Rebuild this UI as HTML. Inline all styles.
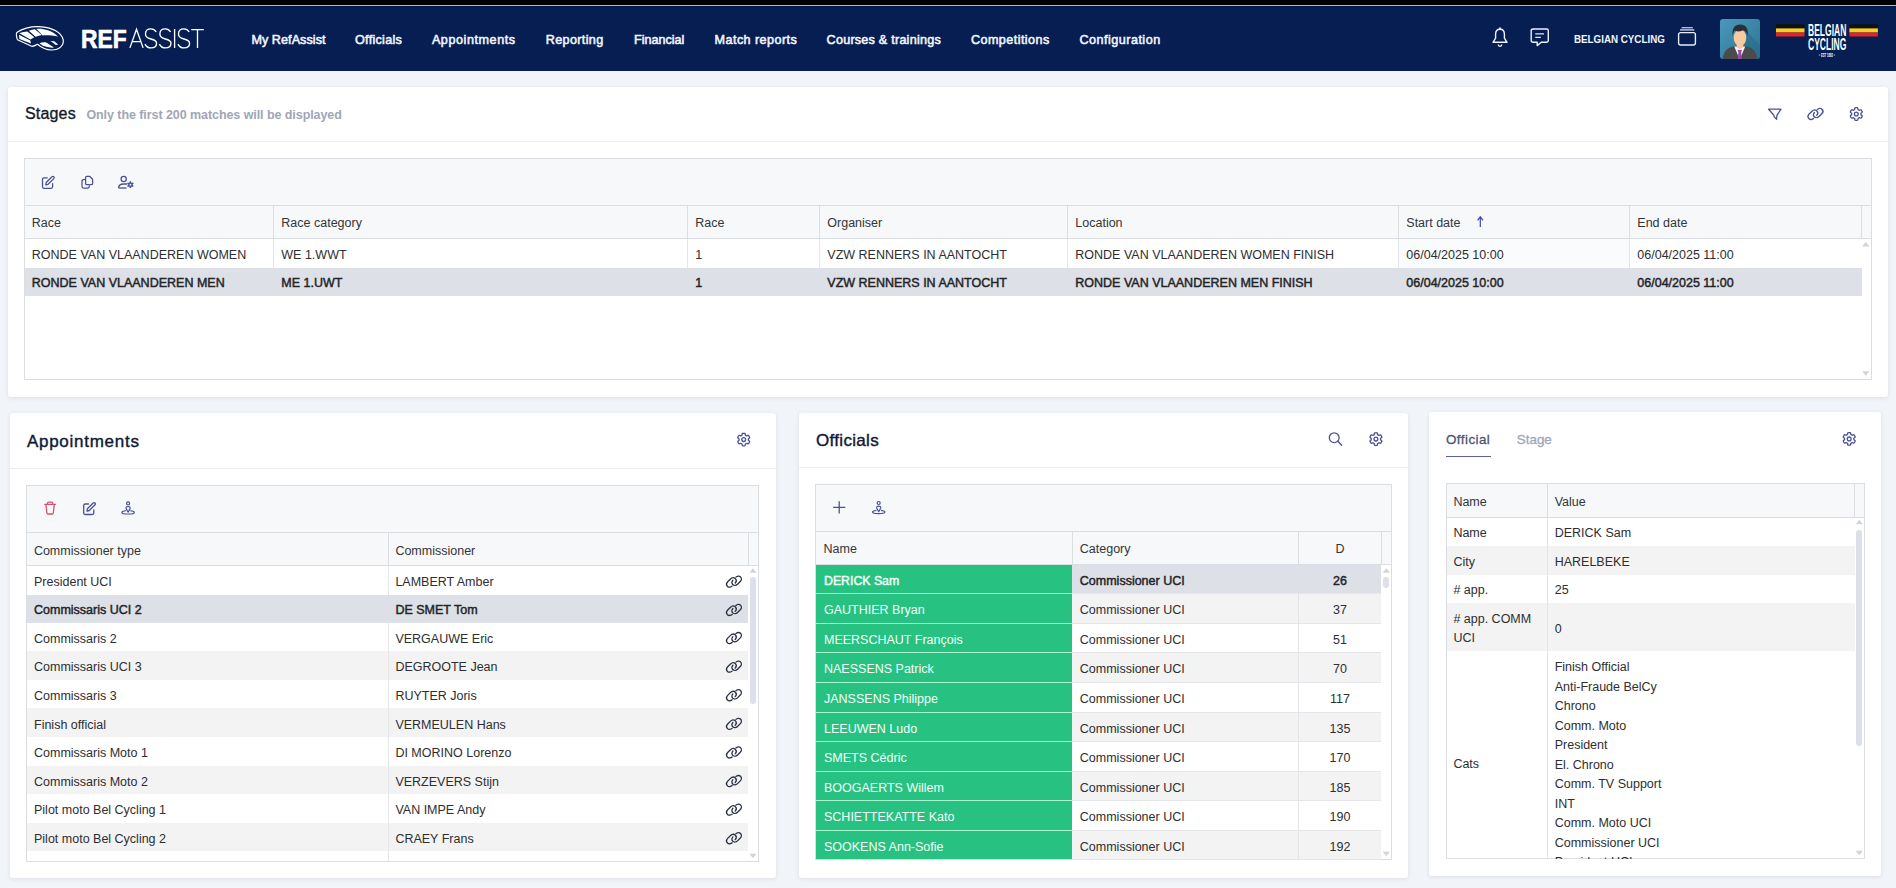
<!DOCTYPE html>
<html><head><meta charset="utf-8"><title>RefAssist</title>
<style>
html,body{margin:0;padding:0;}
body{width:1896px;height:888px;overflow:hidden;position:relative;background:#f1f4f8;font-family:"Liberation Sans",sans-serif;}
.r{position:absolute;}
.t{position:absolute;white-space:nowrap;line-height:1;}
svg.ov{position:absolute;left:0;top:0;width:1896px;height:888px;pointer-events:none;}
</style></head><body>
<div class="r" style="left:0.00px;top:0.00px;width:1896.00px;height:5.00px;background:#000;"></div><div class="r" style="left:0.00px;top:5.00px;width:1896.00px;height:1.00px;background:#b7bbc8;"></div><div class="r" style="left:0.00px;top:6.00px;width:1896.00px;height:1.00px;background:#041444;"></div><div class="r" style="left:0.00px;top:7.00px;width:1896.00px;height:64.00px;background:#061e52;"></div><div class="t" style="left:81.00px;top:26.27px;font-size:26.5px;color:#fff;font-weight:bold;-webkit-text-stroke:0.7px #fff;transform:scaleX(0.86);transform-origin:0 0;">REF</div><div class="t" style="left:251.40px;top:33.83px;font-size:12.6px;color:#f2f5fb;letter-spacing:0.061px;-webkit-text-stroke:0.55px #f2f5fb;">My RefAssist</div><div class="t" style="left:355.00px;top:33.83px;font-size:12.6px;color:#f2f5fb;letter-spacing:0.284px;-webkit-text-stroke:0.55px #f2f5fb;">Officials</div><div class="t" style="left:431.90px;top:33.83px;font-size:12.6px;color:#f2f5fb;letter-spacing:0.560px;-webkit-text-stroke:0.55px #f2f5fb;">Appointments</div><div class="t" style="left:545.80px;top:33.83px;font-size:12.6px;color:#f2f5fb;letter-spacing:0.347px;-webkit-text-stroke:0.55px #f2f5fb;">Reporting</div><div class="t" style="left:634.00px;top:33.83px;font-size:12.6px;color:#f2f5fb;letter-spacing:-0.019px;-webkit-text-stroke:0.55px #f2f5fb;">Financial</div><div class="t" style="left:714.60px;top:33.83px;font-size:12.6px;color:#f2f5fb;letter-spacing:0.434px;-webkit-text-stroke:0.55px #f2f5fb;">Match reports</div><div class="t" style="left:826.60px;top:33.83px;font-size:12.6px;color:#f2f5fb;letter-spacing:0.234px;-webkit-text-stroke:0.55px #f2f5fb;">Courses &amp; trainings</div><div class="t" style="left:971.00px;top:33.83px;font-size:12.6px;color:#f2f5fb;letter-spacing:0.428px;-webkit-text-stroke:0.55px #f2f5fb;">Competitions</div><div class="t" style="left:1079.40px;top:33.83px;font-size:12.6px;color:#f2f5fb;letter-spacing:0.487px;-webkit-text-stroke:0.55px #f2f5fb;">Configuration</div><div class="t" style="left:1573.50px;top:34.09px;font-size:11px;color:#f2f5fb;font-weight:bold;transform:scaleX(0.89);transform-origin:0 0;">BELGIAN CYCLING</div><div class="t" style="left:1807.60px;top:21.93px;font-size:16.5px;color:#fff;font-weight:bold;transform:scaleX(0.517);transform-origin:0 0;">BELGIAN</div><div class="t" style="left:1807.60px;top:36.03px;font-size:16.5px;color:#fff;font-weight:bold;transform:scaleX(0.517);transform-origin:0 0;">CYCLING</div><div class="t" style="left:1821.00px;top:52.63px;font-size:5.4px;color:#fff;font-weight:bold;transform:scaleX(0.5);transform-origin:0 0;">EST 1882</div><div class="r" style="left:8.00px;top:87.00px;width:1880.00px;height:310.00px;background:#fff;border-radius:3px;box-shadow:0 1px 4px rgba(30,40,70,0.10);"></div><div class="r" style="left:10.00px;top:413.00px;width:766.00px;height:465.00px;background:#fff;border-radius:3px;box-shadow:0 1px 4px rgba(30,40,70,0.10);"></div><div class="r" style="left:799.00px;top:413.00px;width:609.00px;height:465.00px;background:#fff;border-radius:3px;box-shadow:0 1px 4px rgba(30,40,70,0.10);"></div><div class="r" style="left:1429.00px;top:412.00px;width:452.00px;height:464.00px;background:#fff;border-radius:3px;box-shadow:0 1px 4px rgba(30,40,70,0.10);"></div><div class="t" style="left:24.90px;top:106.16px;font-size:16px;color:#121a2f;letter-spacing:0.193px;-webkit-text-stroke:0.35px #121a2f;">Stages</div><div class="t" style="left:86.40px;top:109.12px;font-size:12.5px;color:#a0a6b6;font-weight:bold;letter-spacing:-0.068px;">Only the first 200 matches will be displayed</div><div class="r" style="left:8.00px;top:141.00px;width:1880.00px;height:1.00px;background:#eceef2;"></div><div class="r" style="left:24.00px;top:158.00px;width:1848.00px;height:222.00px;background:#fff;box-sizing:border-box;border:1px solid #dadde2;"></div><div class="r" style="left:25.00px;top:159.00px;width:1846.00px;height:46.00px;background:#f7f8fa;"></div><div class="r" style="left:25.00px;top:205.00px;width:1846.00px;height:1.00px;background:#dadde2;"></div><div class="r" style="left:25.00px;top:206.00px;width:1846.00px;height:32.00px;background:#f7f8fa;"></div><div class="r" style="left:25.00px;top:238.00px;width:1846.00px;height:1.00px;background:#dadde2;"></div><div class="r" style="left:273.00px;top:206.00px;width:1.00px;height:32.00px;background:#dadde2;"></div><div class="r" style="left:687.00px;top:206.00px;width:1.00px;height:32.00px;background:#dadde2;"></div><div class="r" style="left:819.00px;top:206.00px;width:1.00px;height:32.00px;background:#dadde2;"></div><div class="r" style="left:1067.00px;top:206.00px;width:1.00px;height:32.00px;background:#dadde2;"></div><div class="r" style="left:1398.00px;top:206.00px;width:1.00px;height:32.00px;background:#dadde2;"></div><div class="r" style="left:1629.00px;top:206.00px;width:1.00px;height:32.00px;background:#dadde2;"></div><div class="r" style="left:1861.00px;top:206.00px;width:1.00px;height:32.00px;background:#dadde2;"></div><div class="t" style="left:31.80px;top:217.42px;font-size:12.5px;color:#333538;">Race</div><div class="t" style="left:281.30px;top:217.42px;font-size:12.5px;color:#333538;">Race category</div><div class="t" style="left:695.30px;top:217.42px;font-size:12.5px;color:#333538;">Race</div><div class="t" style="left:827.30px;top:217.42px;font-size:12.5px;color:#333538;">Organiser</div><div class="t" style="left:1075.30px;top:217.42px;font-size:12.5px;color:#333538;">Location</div><div class="t" style="left:1406.30px;top:217.42px;font-size:12.5px;color:#333538;">Start date</div><div class="t" style="left:1637.30px;top:217.42px;font-size:12.5px;color:#333538;">End date</div><div class="r" style="left:1399.00px;top:239.00px;width:230.00px;height:29.00px;background:#fafbfc;"></div><div class="r" style="left:273.00px;top:239.00px;width:1.00px;height:29.00px;background:#e4e6ea;"></div><div class="r" style="left:687.00px;top:239.00px;width:1.00px;height:29.00px;background:#e4e6ea;"></div><div class="r" style="left:819.00px;top:239.00px;width:1.00px;height:29.00px;background:#e4e6ea;"></div><div class="r" style="left:1067.00px;top:239.00px;width:1.00px;height:29.00px;background:#e4e6ea;"></div><div class="r" style="left:1398.00px;top:239.00px;width:1.00px;height:29.00px;background:#e4e6ea;"></div><div class="r" style="left:1629.00px;top:239.00px;width:1.00px;height:29.00px;background:#e4e6ea;"></div><div class="r" style="left:25.00px;top:268.00px;width:1836.50px;height:27.70px;background:#dde0e6;"></div><div class="t" style="left:31.80px;top:249.02px;font-size:12.5px;color:#2e2e30;">RONDE VAN VLAANDEREN WOMEN</div><div class="t" style="left:281.30px;top:249.02px;font-size:12.5px;color:#2e2e30;">WE 1.WWT</div><div class="t" style="left:695.30px;top:249.02px;font-size:12.5px;color:#2e2e30;">1</div><div class="t" style="left:827.30px;top:249.02px;font-size:12.5px;color:#2e2e30;">VZW RENNERS IN AANTOCHT</div><div class="t" style="left:1075.30px;top:249.02px;font-size:12.5px;color:#2e2e30;">RONDE VAN VLAANDEREN WOMEN FINISH</div><div class="t" style="left:1406.30px;top:249.02px;font-size:12.5px;color:#2e2e30;">06/04/2025 10:00</div><div class="t" style="left:1637.30px;top:249.02px;font-size:12.5px;color:#2e2e30;">06/04/2025 11:00</div><div class="t" style="left:31.80px;top:276.62px;font-size:12.5px;color:#232427;-webkit-text-stroke:0.45px #232427;">RONDE VAN VLAANDEREN MEN</div><div class="t" style="left:281.30px;top:276.62px;font-size:12.5px;color:#232427;-webkit-text-stroke:0.45px #232427;">ME 1.UWT</div><div class="t" style="left:695.30px;top:276.62px;font-size:12.5px;color:#232427;-webkit-text-stroke:0.45px #232427;">1</div><div class="t" style="left:827.30px;top:276.62px;font-size:12.5px;color:#232427;-webkit-text-stroke:0.45px #232427;">VZW RENNERS IN AANTOCHT</div><div class="t" style="left:1075.30px;top:276.62px;font-size:12.5px;color:#232427;-webkit-text-stroke:0.45px #232427;">RONDE VAN VLAANDEREN MEN FINISH</div><div class="t" style="left:1406.30px;top:276.62px;font-size:12.5px;color:#232427;-webkit-text-stroke:0.45px #232427;">06/04/2025 10:00</div><div class="t" style="left:1637.30px;top:276.62px;font-size:12.5px;color:#232427;-webkit-text-stroke:0.45px #232427;">06/04/2025 11:00</div><div class="t" style="left:26.90px;top:432.91px;font-size:17px;color:#101935;letter-spacing:0.739px;-webkit-text-stroke:0.4px #101935;">Appointments</div><div class="r" style="left:10.00px;top:468.00px;width:766.00px;height:1.00px;background:#eceef2;"></div><div class="r" style="left:26.00px;top:485.00px;width:733.00px;height:377.00px;background:#fff;box-sizing:border-box;border:1px solid #dadde2;"></div><div class="r" style="left:27.00px;top:486.00px;width:731.00px;height:46.00px;background:#f7f8fa;"></div><div class="r" style="left:27.00px;top:532.00px;width:731.00px;height:1.00px;background:#dadde2;"></div><div class="r" style="left:27.00px;top:533.00px;width:731.00px;height:32.00px;background:#f7f8fa;"></div><div class="r" style="left:27.00px;top:565.00px;width:731.00px;height:1.00px;background:#dadde2;"></div><div class="r" style="left:388.20px;top:533.00px;width:1.00px;height:32.00px;background:#dadde2;"></div><div class="r" style="left:748.00px;top:533.00px;width:1.00px;height:32.00px;background:#dadde2;"></div><div class="t" style="left:33.90px;top:544.92px;font-size:12.5px;color:#333538;">Commissioner type</div><div class="t" style="left:395.40px;top:544.92px;font-size:12.5px;color:#333538;">Commissioner</div><div class="r" style="left:27.00px;top:566.00px;width:721.00px;height:29.00px;background:#fff;"></div><div class="r" style="left:388.20px;top:566.00px;width:1.00px;height:29.00px;background:#e6e7ea;"></div><div class="t" style="left:34.00px;top:576.12px;font-size:12.5px;color:#2e2e30;">President UCI</div><div class="t" style="left:395.40px;top:576.12px;font-size:12.5px;color:#2e2e30;">LAMBERT Amber</div><div class="r" style="left:27.00px;top:595.00px;width:721.00px;height:27.60px;background:#dde0e6;"></div><div class="t" style="left:34.00px;top:604.12px;font-size:12.5px;color:#232427;-webkit-text-stroke:0.45px #232427;">Commissaris UCI 2</div><div class="t" style="left:395.40px;top:604.12px;font-size:12.5px;color:#232427;-webkit-text-stroke:0.45px #232427;">DE SMET Tom</div><div class="r" style="left:27.00px;top:622.60px;width:721.00px;height:28.60px;background:#fff;"></div><div class="r" style="left:388.20px;top:622.60px;width:1.00px;height:28.60px;background:#e6e7ea;"></div><div class="t" style="left:34.00px;top:632.72px;font-size:12.5px;color:#2e2e30;">Commissaris 2</div><div class="t" style="left:395.40px;top:632.72px;font-size:12.5px;color:#2e2e30;">VERGAUWE Eric</div><div class="r" style="left:27.00px;top:651.20px;width:721.00px;height:28.60px;background:#f3f3f4;"></div><div class="r" style="left:388.20px;top:651.20px;width:1.00px;height:28.60px;background:#e6e7ea;"></div><div class="t" style="left:34.00px;top:661.32px;font-size:12.5px;color:#2e2e30;">Commissaris UCI 3</div><div class="t" style="left:395.40px;top:661.32px;font-size:12.5px;color:#2e2e30;">DEGROOTE Jean</div><div class="r" style="left:27.00px;top:679.80px;width:721.00px;height:28.60px;background:#fff;"></div><div class="r" style="left:388.20px;top:679.80px;width:1.00px;height:28.60px;background:#e6e7ea;"></div><div class="t" style="left:34.00px;top:689.92px;font-size:12.5px;color:#2e2e30;">Commissaris 3</div><div class="t" style="left:395.40px;top:689.92px;font-size:12.5px;color:#2e2e30;">RUYTER Joris</div><div class="r" style="left:27.00px;top:708.40px;width:721.00px;height:28.60px;background:#f3f3f4;"></div><div class="r" style="left:388.20px;top:708.40px;width:1.00px;height:28.60px;background:#e6e7ea;"></div><div class="t" style="left:34.00px;top:718.52px;font-size:12.5px;color:#2e2e30;">Finish official</div><div class="t" style="left:395.40px;top:718.52px;font-size:12.5px;color:#2e2e30;">VERMEULEN Hans</div><div class="r" style="left:27.00px;top:737.00px;width:721.00px;height:28.60px;background:#fff;"></div><div class="r" style="left:388.20px;top:737.00px;width:1.00px;height:28.60px;background:#e6e7ea;"></div><div class="t" style="left:34.00px;top:747.12px;font-size:12.5px;color:#2e2e30;">Commissaris Moto 1</div><div class="t" style="left:395.40px;top:747.12px;font-size:12.5px;color:#2e2e30;">DI MORINO Lorenzo</div><div class="r" style="left:27.00px;top:765.60px;width:721.00px;height:28.60px;background:#f3f3f4;"></div><div class="r" style="left:388.20px;top:765.60px;width:1.00px;height:28.60px;background:#e6e7ea;"></div><div class="t" style="left:34.00px;top:775.72px;font-size:12.5px;color:#2e2e30;">Commissaris Moto 2</div><div class="t" style="left:395.40px;top:775.72px;font-size:12.5px;color:#2e2e30;">VERZEVERS Stijn</div><div class="r" style="left:27.00px;top:794.20px;width:721.00px;height:28.60px;background:#fff;"></div><div class="r" style="left:388.20px;top:794.20px;width:1.00px;height:28.60px;background:#e6e7ea;"></div><div class="t" style="left:34.00px;top:804.32px;font-size:12.5px;color:#2e2e30;">Pilot moto Bel Cycling 1</div><div class="t" style="left:395.40px;top:804.32px;font-size:12.5px;color:#2e2e30;">VAN IMPE Andy</div><div class="r" style="left:27.00px;top:822.80px;width:721.00px;height:28.60px;background:#f3f3f4;"></div><div class="r" style="left:388.20px;top:822.80px;width:1.00px;height:28.60px;background:#e6e7ea;"></div><div class="t" style="left:34.00px;top:832.92px;font-size:12.5px;color:#2e2e30;">Pilot moto Bel Cycling 2</div><div class="t" style="left:395.40px;top:832.92px;font-size:12.5px;color:#2e2e30;">CRAEY Frans</div><div class="r" style="left:27.00px;top:851.40px;width:721.00px;height:9.60px;background:#fff;"></div><div class="r" style="left:388.20px;top:851.40px;width:1.00px;height:9.60px;background:#e6e7ea;"></div><div class="r" style="left:750.20px;top:577.00px;width:5.80px;height:127.00px;background:#dde0ea;border-radius:3px;"></div><div class="t" style="left:816.00px;top:431.91px;font-size:17px;color:#101935;letter-spacing:0.318px;-webkit-text-stroke:0.4px #101935;">Officials</div><div class="r" style="left:799.00px;top:467.00px;width:609.00px;height:1.00px;background:#eceef2;"></div><div class="r" style="left:815.00px;top:484.00px;width:577.00px;height:376.00px;background:#fff;box-sizing:border-box;border:1px solid #dadde2;"></div><div class="r" style="left:816.00px;top:485.00px;width:575.00px;height:46.00px;background:#f7f8fa;"></div><div class="r" style="left:816.00px;top:531.00px;width:575.00px;height:1.00px;background:#dadde2;"></div><div class="r" style="left:816.00px;top:532.00px;width:575.00px;height:32.00px;background:#f7f8fa;"></div><div class="r" style="left:816.00px;top:564.00px;width:575.00px;height:1.00px;background:#dadde2;"></div><div class="r" style="left:1071.50px;top:532.00px;width:1.00px;height:32.00px;background:#dadde2;"></div><div class="r" style="left:1297.70px;top:532.00px;width:1.00px;height:32.00px;background:#dadde2;"></div><div class="r" style="left:1380.90px;top:532.00px;width:1.00px;height:32.00px;background:#dadde2;"></div><div class="t" style="left:823.60px;top:542.92px;font-size:12.5px;color:#333538;">Name</div><div class="t" style="left:1079.80px;top:542.92px;font-size:12.5px;color:#333538;">Category</div><div class="t" style="left:1335.60px;top:542.92px;font-size:12.5px;color:#333538;">D</div><div class="r" style="left:816.00px;top:564.80px;width:256.00px;height:29.56px;background:#a6f5cf;"></div><div class="r" style="left:816.00px;top:564.80px;width:256.00px;height:28.56px;background:#27c281;"></div><div class="r" style="left:1072.00px;top:564.80px;width:309.40px;height:29.56px;background:#e5e6e9;"></div><div class="r" style="left:1072.00px;top:564.80px;width:309.40px;height:28.56px;background:#dde0e6;"></div><div class="t" style="left:824.00px;top:574.89px;font-size:12.3px;color:#effff7;-webkit-text-stroke:0.45px #effff7;">DERICK Sam</div><div class="t" style="left:1079.80px;top:574.72px;font-size:12.5px;color:#232427;-webkit-text-stroke:0.45px #232427;">Commissioner UCI</div><div class="t" style="left:1333.05px;top:574.72px;font-size:12.5px;color:#232427;-webkit-text-stroke:0.45px #232427;">26</div><div class="r" style="left:816.00px;top:594.36px;width:256.00px;height:29.56px;background:#a6f5cf;"></div><div class="r" style="left:816.00px;top:594.36px;width:256.00px;height:28.56px;background:#27c281;"></div><div class="r" style="left:1072.00px;top:594.36px;width:309.40px;height:29.56px;background:#e5e6e9;"></div><div class="r" style="left:1072.00px;top:594.36px;width:309.40px;height:28.56px;background:#f3f3f4;"></div><div class="r" style="left:1297.70px;top:594.36px;width:1.00px;height:28.56px;background:#e3e4e7;"></div><div class="t" style="left:824.00px;top:604.28px;font-size:12.5px;color:#f4fff9;">GAUTHIER Bryan</div><div class="t" style="left:1079.80px;top:604.28px;font-size:12.5px;color:#2e2e30;">Commissioner UCI</div><div class="t" style="left:1333.05px;top:604.28px;font-size:12.5px;color:#2e2e30;">37</div><div class="r" style="left:816.00px;top:623.92px;width:256.00px;height:29.56px;background:#a6f5cf;"></div><div class="r" style="left:816.00px;top:623.92px;width:256.00px;height:28.56px;background:#27c281;"></div><div class="r" style="left:1072.00px;top:623.92px;width:309.40px;height:29.56px;background:#e5e6e9;"></div><div class="r" style="left:1072.00px;top:623.92px;width:309.40px;height:28.56px;background:#fff;"></div><div class="r" style="left:1297.70px;top:623.92px;width:1.00px;height:28.56px;background:#e3e4e7;"></div><div class="t" style="left:824.00px;top:633.84px;font-size:12.5px;color:#f4fff9;">MEERSCHAUT François</div><div class="t" style="left:1079.80px;top:633.84px;font-size:12.5px;color:#2e2e30;">Commissioner UCI</div><div class="t" style="left:1333.05px;top:633.84px;font-size:12.5px;color:#2e2e30;">51</div><div class="r" style="left:816.00px;top:653.48px;width:256.00px;height:29.56px;background:#a6f5cf;"></div><div class="r" style="left:816.00px;top:653.48px;width:256.00px;height:28.56px;background:#27c281;"></div><div class="r" style="left:1072.00px;top:653.48px;width:309.40px;height:29.56px;background:#e5e6e9;"></div><div class="r" style="left:1072.00px;top:653.48px;width:309.40px;height:28.56px;background:#f3f3f4;"></div><div class="r" style="left:1297.70px;top:653.48px;width:1.00px;height:28.56px;background:#e3e4e7;"></div><div class="t" style="left:824.00px;top:663.40px;font-size:12.5px;color:#f4fff9;">NAESSENS Patrick</div><div class="t" style="left:1079.80px;top:663.40px;font-size:12.5px;color:#2e2e30;">Commissioner UCI</div><div class="t" style="left:1333.05px;top:663.40px;font-size:12.5px;color:#2e2e30;">70</div><div class="r" style="left:816.00px;top:683.04px;width:256.00px;height:29.56px;background:#a6f5cf;"></div><div class="r" style="left:816.00px;top:683.04px;width:256.00px;height:28.56px;background:#27c281;"></div><div class="r" style="left:1072.00px;top:683.04px;width:309.40px;height:29.56px;background:#e5e6e9;"></div><div class="r" style="left:1072.00px;top:683.04px;width:309.40px;height:28.56px;background:#fff;"></div><div class="r" style="left:1297.70px;top:683.04px;width:1.00px;height:28.56px;background:#e3e4e7;"></div><div class="t" style="left:824.00px;top:692.96px;font-size:12.5px;color:#f4fff9;">JANSSENS Philippe</div><div class="t" style="left:1079.80px;top:692.96px;font-size:12.5px;color:#2e2e30;">Commissioner UCI</div><div class="t" style="left:1330.03px;top:692.96px;font-size:12.5px;color:#2e2e30;">117</div><div class="r" style="left:816.00px;top:712.60px;width:256.00px;height:29.56px;background:#a6f5cf;"></div><div class="r" style="left:816.00px;top:712.60px;width:256.00px;height:28.56px;background:#27c281;"></div><div class="r" style="left:1072.00px;top:712.60px;width:309.40px;height:29.56px;background:#e5e6e9;"></div><div class="r" style="left:1072.00px;top:712.60px;width:309.40px;height:28.56px;background:#f3f3f4;"></div><div class="r" style="left:1297.70px;top:712.60px;width:1.00px;height:28.56px;background:#e3e4e7;"></div><div class="t" style="left:824.00px;top:722.52px;font-size:12.5px;color:#f4fff9;">LEEUWEN Ludo</div><div class="t" style="left:1079.80px;top:722.52px;font-size:12.5px;color:#2e2e30;">Commissioner UCI</div><div class="t" style="left:1329.57px;top:722.52px;font-size:12.5px;color:#2e2e30;">135</div><div class="r" style="left:816.00px;top:742.16px;width:256.00px;height:29.56px;background:#a6f5cf;"></div><div class="r" style="left:816.00px;top:742.16px;width:256.00px;height:28.56px;background:#27c281;"></div><div class="r" style="left:1072.00px;top:742.16px;width:309.40px;height:29.56px;background:#e5e6e9;"></div><div class="r" style="left:1072.00px;top:742.16px;width:309.40px;height:28.56px;background:#fff;"></div><div class="r" style="left:1297.70px;top:742.16px;width:1.00px;height:28.56px;background:#e3e4e7;"></div><div class="t" style="left:824.00px;top:752.08px;font-size:12.5px;color:#f4fff9;">SMETS Cédric</div><div class="t" style="left:1079.80px;top:752.08px;font-size:12.5px;color:#2e2e30;">Commissioner UCI</div><div class="t" style="left:1329.57px;top:752.08px;font-size:12.5px;color:#2e2e30;">170</div><div class="r" style="left:816.00px;top:771.72px;width:256.00px;height:29.56px;background:#a6f5cf;"></div><div class="r" style="left:816.00px;top:771.72px;width:256.00px;height:28.56px;background:#27c281;"></div><div class="r" style="left:1072.00px;top:771.72px;width:309.40px;height:29.56px;background:#e5e6e9;"></div><div class="r" style="left:1072.00px;top:771.72px;width:309.40px;height:28.56px;background:#f3f3f4;"></div><div class="r" style="left:1297.70px;top:771.72px;width:1.00px;height:28.56px;background:#e3e4e7;"></div><div class="t" style="left:824.00px;top:781.64px;font-size:12.5px;color:#f4fff9;">BOOGAERTS Willem</div><div class="t" style="left:1079.80px;top:781.64px;font-size:12.5px;color:#2e2e30;">Commissioner UCI</div><div class="t" style="left:1329.57px;top:781.64px;font-size:12.5px;color:#2e2e30;">185</div><div class="r" style="left:816.00px;top:801.28px;width:256.00px;height:29.56px;background:#a6f5cf;"></div><div class="r" style="left:816.00px;top:801.28px;width:256.00px;height:28.56px;background:#27c281;"></div><div class="r" style="left:1072.00px;top:801.28px;width:309.40px;height:29.56px;background:#e5e6e9;"></div><div class="r" style="left:1072.00px;top:801.28px;width:309.40px;height:28.56px;background:#fff;"></div><div class="r" style="left:1297.70px;top:801.28px;width:1.00px;height:28.56px;background:#e3e4e7;"></div><div class="t" style="left:824.00px;top:811.20px;font-size:12.5px;color:#f4fff9;">SCHIETTEKATTE Kato</div><div class="t" style="left:1079.80px;top:811.20px;font-size:12.5px;color:#2e2e30;">Commissioner UCI</div><div class="t" style="left:1329.57px;top:811.20px;font-size:12.5px;color:#2e2e30;">190</div><div class="r" style="left:816.00px;top:830.84px;width:256.00px;height:29.16px;background:#a6f5cf;"></div><div class="r" style="left:816.00px;top:830.84px;width:256.00px;height:28.16px;background:#27c281;"></div><div class="r" style="left:1072.00px;top:830.84px;width:309.40px;height:29.16px;background:#e5e6e9;"></div><div class="r" style="left:1072.00px;top:830.84px;width:309.40px;height:28.16px;background:#f3f3f4;"></div><div class="r" style="left:1297.70px;top:830.84px;width:1.00px;height:28.16px;background:#e3e4e7;"></div><div class="t" style="left:824.00px;top:840.76px;font-size:12.5px;color:#f4fff9;">SOOKENS Ann-Sofie</div><div class="t" style="left:1079.80px;top:840.76px;font-size:12.5px;color:#2e2e30;">Commissioner UCI</div><div class="t" style="left:1329.57px;top:840.76px;font-size:12.5px;color:#2e2e30;">192</div><div class="r" style="left:1383.30px;top:577.00px;width:5.80px;height:11.00px;background:#dde0ea;border-radius:3px;"></div><div class="t" style="left:1446.00px;top:433.16px;font-size:13.4px;color:#4d546e;letter-spacing:0.452px;-webkit-text-stroke:0.3px #4d546e;">Official</div><div class="t" style="left:1516.80px;top:433.16px;font-size:13.4px;color:#9ea5bb;letter-spacing:-0.003px;-webkit-text-stroke:0.3px #9ea5bb;">Stage</div><div class="r" style="left:1446.00px;top:455.60px;width:45.00px;height:1.60px;background:#5a62a0;"></div><div class="r" style="left:1446.00px;top:483.00px;width:419.00px;height:376.00px;background:#fff;box-sizing:border-box;border:1px solid #dadde2;"></div><div class="r" style="left:1447.00px;top:484.00px;width:417.00px;height:33.00px;background:#f7f8fa;"></div><div class="r" style="left:1447.00px;top:517.00px;width:417.00px;height:1.00px;background:#dadde2;"></div><div class="r" style="left:1546.80px;top:484.00px;width:1.00px;height:33.00px;background:#dadde2;"></div><div class="r" style="left:1854.20px;top:484.00px;width:1.00px;height:33.00px;background:#dadde2;"></div><div class="t" style="left:1453.40px;top:496.22px;font-size:12.5px;color:#333538;">Name</div><div class="t" style="left:1554.70px;top:496.22px;font-size:12.5px;color:#333538;">Value</div><div class="r" style="left:1447.00px;top:518.00px;width:408.00px;height:28.00px;background:#fff;"></div><div class="r" style="left:1447.00px;top:546.00px;width:408.00px;height:29.00px;background:#f3f3f4;"></div><div class="r" style="left:1447.00px;top:575.00px;width:408.00px;height:28.00px;background:#fff;"></div><div class="r" style="left:1447.00px;top:603.00px;width:408.00px;height:48.00px;background:#f3f3f4;"></div><div class="r" style="left:1447.00px;top:651.00px;width:408.00px;height:207.00px;background:#fff;"></div><div class="r" style="left:1546.80px;top:518.00px;width:1.00px;height:340.00px;background:#e3e4e7;"></div><div class="t" style="left:1453.40px;top:526.92px;font-size:12.5px;color:#2e2e30;">Name</div><div class="t" style="left:1554.70px;top:526.92px;font-size:12.5px;color:#2e2e30;">DERICK Sam</div><div class="t" style="left:1453.40px;top:555.92px;font-size:12.5px;color:#2e2e30;">City</div><div class="t" style="left:1554.70px;top:555.92px;font-size:12.5px;color:#2e2e30;">HARELBEKE</div><div class="t" style="left:1453.40px;top:583.92px;font-size:12.5px;color:#2e2e30;"># app.</div><div class="t" style="left:1554.70px;top:583.92px;font-size:12.5px;color:#2e2e30;">25</div><div class="t" style="left:1453.40px;top:612.92px;font-size:12.5px;color:#2e2e30;"># app. COMM</div><div class="t" style="left:1453.40px;top:631.92px;font-size:12.5px;color:#2e2e30;">UCI</div><div class="t" style="left:1554.70px;top:622.62px;font-size:12.5px;color:#2e2e30;">0</div><div class="t" style="left:1453.40px;top:758.12px;font-size:12.5px;color:#2e2e30;">Cats</div><div class="r" style="left:1547px;top:651px;width:307px;height:207.5px;overflow:hidden;"><div class="t" style="left:7.7px;top:10.02px;font-size:12.5px;color:#2e2e30;">Finish Official</div><div class="t" style="left:7.7px;top:29.52px;font-size:12.5px;color:#2e2e30;">Anti-Fraude BelCy</div><div class="t" style="left:7.7px;top:49.02px;font-size:12.5px;color:#2e2e30;">Chrono</div><div class="t" style="left:7.7px;top:68.52px;font-size:12.5px;color:#2e2e30;">Comm. Moto</div><div class="t" style="left:7.7px;top:88.02px;font-size:12.5px;color:#2e2e30;">President</div><div class="t" style="left:7.7px;top:107.52px;font-size:12.5px;color:#2e2e30;">El. Chrono</div><div class="t" style="left:7.7px;top:127.02px;font-size:12.5px;color:#2e2e30;">Comm. TV Support</div><div class="t" style="left:7.7px;top:146.52px;font-size:12.5px;color:#2e2e30;">INT</div><div class="t" style="left:7.7px;top:166.02px;font-size:12.5px;color:#2e2e30;">Comm. Moto UCI</div><div class="t" style="left:7.7px;top:185.52px;font-size:12.5px;color:#2e2e30;">Commissioner UCI</div><div class="t" style="left:7.7px;top:205.02px;font-size:12.5px;color:#2e2e30;">President UCI</div></div><div class="r" style="left:1856.40px;top:529.50px;width:5.80px;height:216.00px;background:#dde0ea;border-radius:3px;"></div>
<svg class="ov" width="1896" height="888" viewBox="0 0 1896 888">
<g transform="translate(14,24) scale(0.032658)"><path d="M85,262 C300,118 600,68 850,86 C1160,108 1460,260 1505,480 C1535,650 1400,795 1150,795 C1000,795 850,735 720,622 C650,652 600,692 540,682 L108,482 C75,420 62,300 85,262 Z" fill="none" stroke="#fff" stroke-width="36" stroke-linejoin="round"/><path d="M150,330 L500,505 L518,595 L168,458 Z" fill="#fff"/><path d="M165,283 C250,245 330,232 410,228 L622,405 L502,478 Z" fill="#fff"/><path d="M455,208 C520,180 585,165 640,160 L850,338 L660,392 Z" fill="#fff"/><path d="M690,150 C920,140 1160,195 1345,385 C1200,352 1000,342 878,350 Z" fill="#fff"/><path d="M780,592 C850,560 930,555 1000,572 L1225,722 C1050,732 900,692 780,592 Z" fill="#fff"/><path d="M1118,520 L1232,532 L1352,630 L1282,642 Z" fill="#fff"/></g><path d="M129.9,47.9 L136.5,29.2 L143.1,47.9 M132.1,41.6 H140.9 M174.6,29 V47.9 M191.2,29.6 H203.8 M197.5,29.6 V47.9" fill="none" stroke="#fff" stroke-width="1.35"/><g transform="translate(144.6,28.9) scale(12.599999999999994,19)"><path d="M0.92,0.16 C0.8,0.03 0.64,0.0 0.5,0.0 C0.24,0.0 0.07,0.11 0.07,0.27 C0.07,0.44 0.24,0.49 0.5,0.53 C0.78,0.57 0.95,0.63 0.95,0.76 C0.95,0.91 0.78,1.0 0.5,1.0 C0.3,1.0 0.13,0.93 0.03,0.8" fill="none" stroke="#fff" stroke-width="1.35" vector-effect="non-scaling-stroke"/></g><g transform="translate(159.0,28.9) scale(12.599999999999994,19)"><path d="M0.92,0.16 C0.8,0.03 0.64,0.0 0.5,0.0 C0.24,0.0 0.07,0.11 0.07,0.27 C0.07,0.44 0.24,0.49 0.5,0.53 C0.78,0.57 0.95,0.63 0.95,0.76 C0.95,0.91 0.78,1.0 0.5,1.0 C0.3,1.0 0.13,0.93 0.03,0.8" fill="none" stroke="#fff" stroke-width="1.35" vector-effect="non-scaling-stroke"/></g><g transform="translate(177.6,28.9) scale(12.599999999999994,19)"><path d="M0.92,0.16 C0.8,0.03 0.64,0.0 0.5,0.0 C0.24,0.0 0.07,0.11 0.07,0.27 C0.07,0.44 0.24,0.49 0.5,0.53 C0.78,0.57 0.95,0.63 0.95,0.76 C0.95,0.91 0.78,1.0 0.5,1.0 C0.3,1.0 0.13,0.93 0.03,0.8" fill="none" stroke="#fff" stroke-width="1.35" vector-effect="non-scaling-stroke"/></g><path d="M1493,42.3 L1495.6,38.2 L1495.6,34.2 C1495.6,30.9 1497.4,29.2 1500,29.2 C1502.6,29.2 1504.4,30.9 1504.4,34.2 L1504.4,38.2 L1507,42.3 Z" fill="none" stroke="#eef2fa" stroke-width="1.4" stroke-linejoin="round"/><path d="M1499.2,28.6 L1500,27.9 L1500.8,28.6" fill="none" stroke="#eef2fa" stroke-width="1.2"/><path d="M1498.2,44.6 A1.8,1.8 0 0 0 1501.8,44.6" fill="none" stroke="#eef2fa" stroke-width="1.3"/><path d="M1533.2,29 H1546.6 Q1548.3,29 1548.3,30.7 V40.6 Q1548.3,42.3 1546.6,42.3 H1541.2 L1537.2,45.6 V42.3 H1533.2 Q1531.2,42.3 1531.2,40.6 V30.7 Q1531.2,29 1533.2,29 Z" fill="none" stroke="#eef2fa" stroke-width="1.4" stroke-linejoin="round"/><path d="M1535.3,33.8 H1544 M1535.3,37.3 H1540.8" stroke="#dfe6f5" stroke-width="1.3"/><rect x="1678.6" y="32.6" width="16.8" height="12.4" rx="2" fill="none" stroke="#e6ecf7" stroke-width="1.4"/><path d="M1680,29.9 H1694.3" stroke="#b9c6de" stroke-width="1.5"/><path d="M1681.6,27.7 H1692.8" stroke="#b9c6de" stroke-width="1.3"/><defs><linearGradient id="av" x1="0" y1="0" x2="1" y2="1"><stop offset="0" stop-color="#4b98bd"/><stop offset="1" stop-color="#2b7590"/></linearGradient><clipPath id="avc"><rect x="1720" y="19" width="40" height="40" rx="3"/></clipPath></defs><g clip-path="url(#avc)"><rect x="1720" y="19" width="40" height="40" fill="url(#av)"/><path d="M1746,31 L1762,47 L1762,60 L1738,60 Z" fill="#256a85" opacity="0.55"/><path d="M1722.5,60 C1723.5,52 1726,48.5 1733,46.5 L1740,45.5 L1747,46.5 C1754,48.5 1756.5,52 1757.5,60 Z" fill="#4b4a4c"/><path d="M1734.2,46.6 L1739.8,59.5 L1745.2,46.6 Z" fill="#f5f2f5"/><path d="M1737.5,50 L1742,50 L1741.2,52 L1741.8,59 L1737.8,59 L1738.4,52 Z" fill="#9a48a6"/><path d="M1736.5,44 L1743.5,44 L1743,47.5 L1740,49 L1737,47.5 Z" fill="#f6c99d"/><ellipse cx="1740" cy="37.8" rx="6.3" ry="8.2" fill="#f7cb9f"/><path d="M1732.6,36 C1731.8,28 1735,24.6 1740.2,24.6 C1745.5,24.6 1748.6,28 1747.8,36 C1747,33 1746,31 1743,30.3 C1740,32 1736,31.6 1734.6,30.6 C1733.5,32 1733,34 1732.6,36 Z" fill="#2f2e34"/></g><rect x="1776" y="24.2" width="28.5" height="4.2" fill="#111"/><rect x="1776" y="28.4" width="28.5" height="4.1" fill="#f7d21c"/><rect x="1776" y="32.5" width="28.5" height="4.0" fill="#e3232a"/><rect x="1849.4" y="24.2" width="28.5" height="4.2" fill="#111"/><rect x="1849.4" y="28.4" width="28.5" height="4.1" fill="#f7d21c"/><rect x="1849.4" y="32.5" width="28.5" height="4.0" fill="#e3232a"/><path d="M1818.8,55 H1820.3 M1833.6,55 H1835.1" stroke="#fff" stroke-width="0.7"/><path d="M1768.6,109.2 H1781 L1776.9,115.3 L1776.6,119.3 L1774.1,116.6 L1773.9,115.3 Z" fill="none" stroke="#4a5196" stroke-width="1.3" stroke-linejoin="round"/><g transform="translate(0.0,0.04999999999999716)" fill="none" stroke="#4a5196" stroke-width="1.35" stroke-linecap="round"><path d="M1813.6,118.4 C1812.5,119.5 1810.2,119.9 1809,118.7 C1807.6,117.3 1807.9,115.3 1809.2,114 L1812,111.2 C1813.4,109.8 1815.5,109.6 1816.9,110.9 C1818.1,112.1 1817.9,114 1816.7,115.3"/><path d="M1817.4,109.4 C1818.6,108.2 1820.8,107.9 1822,109.1 C1823.3,110.4 1823.1,112.4 1821.8,113.7 L1819,116.5 C1817.6,117.9 1815.4,118 1814.2,116.8 C1813,115.6 1813.2,113.7 1814.4,112.5"/></g><path d="M1856.30,107.70 L1856.41,107.70 L1856.52,107.70 L1856.63,107.71 L1856.74,107.72 L1856.85,107.72 L1856.96,107.73 L1857.07,107.75 L1857.18,107.76 L1857.29,107.78 L1857.39,107.80 L1857.50,107.82 L1857.60,107.87 L1857.69,107.99 L1857.76,108.16 L1857.81,108.37 L1857.85,108.60 L1857.87,108.85 L1857.90,109.09 L1857.92,109.29 L1857.95,109.46 L1858.00,109.58 L1858.06,109.64 L1858.14,109.67 L1858.21,109.71 L1858.29,109.74 L1858.36,109.78 L1858.43,109.81 L1858.51,109.85 L1858.58,109.89 L1858.65,109.93 L1858.72,109.97 L1858.79,110.01 L1858.86,110.06 L1858.93,110.10 L1859.00,110.15 L1859.06,110.20 L1859.13,110.25 L1859.19,110.30 L1859.28,110.32 L1859.40,110.30 L1859.56,110.24 L1859.76,110.16 L1859.97,110.06 L1860.20,109.96 L1860.42,109.88 L1860.63,109.82 L1860.81,109.79 L1860.96,109.81 L1861.05,109.87 L1861.13,109.95 L1861.20,110.04 L1861.26,110.12 L1861.33,110.21 L1861.40,110.30 L1861.46,110.39 L1861.52,110.48 L1861.58,110.57 L1861.64,110.66 L1861.70,110.76 L1861.76,110.85 L1861.81,110.95 L1861.86,111.04 L1861.91,111.14 L1861.96,111.24 L1862.01,111.34 L1862.06,111.44 L1862.10,111.54 L1862.14,111.64 L1862.18,111.74 L1862.22,111.85 L1862.26,111.95 L1862.26,112.06 L1862.20,112.20 L1862.09,112.34 L1861.93,112.49 L1861.75,112.64 L1861.55,112.79 L1861.35,112.93 L1861.18,113.05 L1861.05,113.16 L1860.97,113.26 L1860.95,113.35 L1860.96,113.43 L1860.97,113.51 L1860.98,113.59 L1860.99,113.67 L1860.99,113.75 L1861.00,113.84 L1861.00,113.92 L1861.00,114.00 L1861.00,114.08 L1861.00,114.16 L1860.99,114.25 L1860.99,114.33 L1860.98,114.41 L1860.97,114.49 L1860.96,114.57 L1860.95,114.65 L1860.97,114.74 L1861.05,114.84 L1861.18,114.95 L1861.35,115.07 L1861.55,115.21 L1861.75,115.36 L1861.93,115.51 L1862.09,115.66 L1862.20,115.80 L1862.26,115.94 L1862.26,116.05 L1862.22,116.15 L1862.18,116.26 L1862.14,116.36 L1862.10,116.46 L1862.06,116.56 L1862.01,116.66 L1861.96,116.76 L1861.91,116.86 L1861.86,116.96 L1861.81,117.05 L1861.76,117.15 L1861.70,117.24 L1861.64,117.34 L1861.58,117.43 L1861.52,117.52 L1861.46,117.61 L1861.40,117.70 L1861.33,117.79 L1861.26,117.88 L1861.20,117.96 L1861.13,118.05 L1861.05,118.13 L1860.96,118.19 L1860.81,118.21 L1860.63,118.18 L1860.42,118.12 L1860.20,118.04 L1859.97,117.94 L1859.76,117.84 L1859.56,117.76 L1859.40,117.70 L1859.28,117.68 L1859.19,117.70 L1859.13,117.75 L1859.06,117.80 L1859.00,117.85 L1858.93,117.90 L1858.86,117.94 L1858.79,117.99 L1858.72,118.03 L1858.65,118.07 L1858.58,118.11 L1858.51,118.15 L1858.43,118.19 L1858.36,118.22 L1858.29,118.26 L1858.21,118.29 L1858.14,118.33 L1858.06,118.36 L1858.00,118.42 L1857.95,118.54 L1857.92,118.71 L1857.90,118.91 L1857.87,119.15 L1857.85,119.40 L1857.81,119.63 L1857.76,119.84 L1857.69,120.01 L1857.60,120.13 L1857.50,120.18 L1857.39,120.20 L1857.29,120.22 L1857.18,120.24 L1857.07,120.25 L1856.96,120.27 L1856.85,120.28 L1856.74,120.28 L1856.63,120.29 L1856.52,120.30 L1856.41,120.30 L1856.30,120.30 L1856.19,120.30 L1856.08,120.30 L1855.97,120.29 L1855.86,120.28 L1855.75,120.28 L1855.64,120.27 L1855.53,120.25 L1855.42,120.24 L1855.31,120.22 L1855.21,120.20 L1855.10,120.18 L1855.00,120.13 L1854.91,120.01 L1854.84,119.84 L1854.79,119.63 L1854.75,119.40 L1854.73,119.15 L1854.70,118.91 L1854.68,118.71 L1854.65,118.54 L1854.60,118.42 L1854.54,118.36 L1854.46,118.33 L1854.39,118.29 L1854.31,118.26 L1854.24,118.22 L1854.17,118.19 L1854.09,118.15 L1854.02,118.11 L1853.95,118.07 L1853.88,118.03 L1853.81,117.99 L1853.74,117.94 L1853.67,117.90 L1853.60,117.85 L1853.54,117.80 L1853.47,117.75 L1853.41,117.70 L1853.32,117.68 L1853.20,117.70 L1853.04,117.76 L1852.84,117.84 L1852.63,117.94 L1852.40,118.04 L1852.18,118.12 L1851.97,118.18 L1851.79,118.21 L1851.64,118.19 L1851.55,118.13 L1851.47,118.05 L1851.40,117.96 L1851.34,117.88 L1851.27,117.79 L1851.20,117.70 L1851.14,117.61 L1851.08,117.52 L1851.02,117.43 L1850.96,117.34 L1850.90,117.24 L1850.84,117.15 L1850.79,117.05 L1850.74,116.96 L1850.69,116.86 L1850.64,116.76 L1850.59,116.66 L1850.54,116.56 L1850.50,116.46 L1850.46,116.36 L1850.42,116.26 L1850.38,116.15 L1850.34,116.05 L1850.34,115.94 L1850.40,115.80 L1850.51,115.66 L1850.67,115.51 L1850.85,115.36 L1851.05,115.21 L1851.25,115.07 L1851.42,114.95 L1851.55,114.84 L1851.63,114.74 L1851.65,114.65 L1851.64,114.57 L1851.63,114.49 L1851.62,114.41 L1851.61,114.33 L1851.61,114.25 L1851.60,114.16 L1851.60,114.08 L1851.60,114.00 L1851.60,113.92 L1851.60,113.84 L1851.61,113.75 L1851.61,113.67 L1851.62,113.59 L1851.63,113.51 L1851.64,113.43 L1851.65,113.35 L1851.63,113.26 L1851.55,113.16 L1851.42,113.05 L1851.25,112.93 L1851.05,112.79 L1850.85,112.64 L1850.67,112.49 L1850.51,112.34 L1850.40,112.20 L1850.34,112.06 L1850.34,111.95 L1850.38,111.85 L1850.42,111.74 L1850.46,111.64 L1850.50,111.54 L1850.54,111.44 L1850.59,111.34 L1850.64,111.24 L1850.69,111.14 L1850.74,111.04 L1850.79,110.95 L1850.84,110.85 L1850.90,110.76 L1850.96,110.66 L1851.02,110.57 L1851.08,110.48 L1851.14,110.39 L1851.20,110.30 L1851.27,110.21 L1851.34,110.12 L1851.40,110.04 L1851.47,109.95 L1851.55,109.87 L1851.64,109.81 L1851.79,109.79 L1851.97,109.82 L1852.18,109.88 L1852.40,109.96 L1852.63,110.06 L1852.84,110.16 L1853.04,110.24 L1853.20,110.30 L1853.32,110.32 L1853.41,110.30 L1853.47,110.25 L1853.54,110.20 L1853.60,110.15 L1853.67,110.10 L1853.74,110.06 L1853.81,110.01 L1853.88,109.97 L1853.95,109.93 L1854.02,109.89 L1854.09,109.85 L1854.17,109.81 L1854.24,109.78 L1854.31,109.74 L1854.39,109.71 L1854.46,109.67 L1854.54,109.64 L1854.60,109.58 L1854.65,109.46 L1854.68,109.29 L1854.70,109.09 L1854.73,108.85 L1854.75,108.60 L1854.79,108.37 L1854.84,108.16 L1854.91,107.99 L1855.00,107.87 L1855.10,107.82 L1855.21,107.80 L1855.31,107.78 L1855.42,107.76 L1855.53,107.75 L1855.64,107.73 L1855.75,107.72 L1855.86,107.72 L1855.97,107.71 L1856.08,107.70 L1856.19,107.70Z" fill="none" stroke="#4a5196" stroke-width="1.3" stroke-linejoin="round"/><circle cx="1856.3" cy="114.0" r="1.9" fill="none" stroke="#4a5196" stroke-width="1.3"/><path d="M47.3,177.79999999999998 H44.0 Q42.5,177.79999999999998 42.5,179.29999999999998 V186.79999999999998 Q42.5,188.29999999999998 44.0,188.29999999999998 H51.099999999999994 Q52.599999999999994,188.29999999999998 52.599999999999994,186.79999999999998 V183.7" fill="none" stroke="#4a5196" stroke-width="1.3" stroke-linecap="round"/><path d="M45.8,184.79999999999998 L46.199999999999996,182.5 L52.0,176.79999999999998 Q52.9,176.0 53.8,176.79999999999998 Q54.599999999999994,177.7 53.8,178.6 L48.099999999999994,184.29999999999998 Z" fill="none" stroke="#4a5196" stroke-width="1.3" stroke-linejoin="round"/><path d="M85.6,178.2 V177.6 Q85.6,176.3 86.9,176.3 H89.6 L92.6,179.3 V183.4 Q92.6,184.7 91.3,184.7 H86.9 Q85.6,184.7 85.6,183.4 Z" fill="none" stroke="#4a5196" stroke-width="1.25" stroke-linejoin="round"/><path d="M85.2,179.4 Q82.0,179.4 82.0,181.2 V186.6 Q82.0,188.1 83.5,188.1 H87.6 Q89.4,188.1 89.4,185.6" fill="none" stroke="#4a5196" stroke-width="1.25"/><circle cx="123.7" cy="179.0" r="2.6" fill="none" stroke="#4a5196" stroke-width="1.3"/><path d="M118.6,188.0 Q118.6,184.0 123.6,184.0 H127.2" fill="none" stroke="#4a5196" stroke-width="1.3"/><path d="M118.6,188.0 H126.5" fill="none" stroke="#4a5196" stroke-width="1.3"/><path d="M130.40,181.30 L130.46,181.30 L130.52,181.30 L130.58,181.30 L130.64,181.31 L130.70,181.31 L130.76,181.32 L130.81,181.33 L130.87,181.33 L130.93,181.34 L130.99,181.35 L131.05,181.36 L131.10,181.40 L131.15,181.47 L131.18,181.59 L131.20,181.73 L131.21,181.89 L131.21,182.05 L131.21,182.21 L131.21,182.35 L131.22,182.46 L131.23,182.53 L131.26,182.57 L131.30,182.58 L131.34,182.60 L131.37,182.62 L131.41,182.63 L131.44,182.65 L131.48,182.67 L131.52,182.69 L131.55,182.71 L131.58,182.73 L131.62,182.75 L131.65,182.77 L131.69,182.79 L131.72,182.82 L131.75,182.84 L131.78,182.86 L131.82,182.89 L131.86,182.90 L131.93,182.87 L132.03,182.82 L132.15,182.75 L132.29,182.67 L132.43,182.59 L132.58,182.52 L132.71,182.47 L132.82,182.44 L132.91,182.44 L132.97,182.47 L133.00,182.51 L133.04,182.56 L133.08,182.61 L133.12,182.65 L133.15,182.70 L133.19,182.75 L133.22,182.80 L133.25,182.85 L133.28,182.90 L133.31,182.95 L133.34,183.00 L133.37,183.05 L133.40,183.10 L133.43,183.16 L133.46,183.21 L133.48,183.26 L133.51,183.32 L133.53,183.37 L133.55,183.43 L133.57,183.48 L133.59,183.54 L133.61,183.59 L133.61,183.66 L133.57,183.73 L133.49,183.82 L133.37,183.90 L133.24,183.99 L133.10,184.08 L132.96,184.15 L132.84,184.22 L132.75,184.29 L132.69,184.34 L132.68,184.38 L132.68,184.42 L132.69,184.46 L132.69,184.50 L132.69,184.54 L132.70,184.58 L132.70,184.62 L132.70,184.66 L132.70,184.70 L132.70,184.74 L132.70,184.78 L132.70,184.82 L132.69,184.86 L132.69,184.90 L132.69,184.94 L132.68,184.98 L132.68,185.02 L132.69,185.06 L132.75,185.11 L132.84,185.18 L132.96,185.25 L133.10,185.32 L133.24,185.41 L133.37,185.50 L133.49,185.58 L133.57,185.67 L133.61,185.74 L133.61,185.81 L133.59,185.86 L133.57,185.92 L133.55,185.97 L133.53,186.03 L133.51,186.08 L133.48,186.14 L133.46,186.19 L133.43,186.24 L133.40,186.30 L133.37,186.35 L133.34,186.40 L133.31,186.45 L133.28,186.50 L133.25,186.55 L133.22,186.60 L133.19,186.65 L133.15,186.70 L133.12,186.75 L133.08,186.79 L133.04,186.84 L133.00,186.89 L132.97,186.93 L132.91,186.96 L132.82,186.96 L132.71,186.93 L132.58,186.88 L132.43,186.81 L132.29,186.73 L132.15,186.65 L132.03,186.58 L131.93,186.53 L131.86,186.50 L131.82,186.51 L131.78,186.54 L131.75,186.56 L131.72,186.58 L131.69,186.61 L131.65,186.63 L131.62,186.65 L131.58,186.67 L131.55,186.69 L131.52,186.71 L131.48,186.73 L131.44,186.75 L131.41,186.77 L131.37,186.78 L131.34,186.80 L131.30,186.82 L131.26,186.83 L131.23,186.87 L131.22,186.94 L131.21,187.05 L131.21,187.19 L131.21,187.35 L131.21,187.51 L131.20,187.67 L131.18,187.81 L131.15,187.93 L131.10,188.00 L131.05,188.04 L130.99,188.05 L130.93,188.06 L130.87,188.07 L130.81,188.07 L130.76,188.08 L130.70,188.09 L130.64,188.09 L130.58,188.10 L130.52,188.10 L130.46,188.10 L130.40,188.10 L130.34,188.10 L130.28,188.10 L130.22,188.10 L130.16,188.09 L130.10,188.09 L130.04,188.08 L129.99,188.07 L129.93,188.07 L129.87,188.06 L129.81,188.05 L129.75,188.04 L129.70,188.00 L129.65,187.93 L129.62,187.81 L129.60,187.67 L129.59,187.51 L129.59,187.35 L129.59,187.19 L129.59,187.05 L129.58,186.94 L129.57,186.87 L129.54,186.83 L129.50,186.82 L129.46,186.80 L129.43,186.78 L129.39,186.77 L129.36,186.75 L129.32,186.73 L129.28,186.71 L129.25,186.69 L129.22,186.67 L129.18,186.65 L129.15,186.63 L129.11,186.61 L129.08,186.58 L129.05,186.56 L129.02,186.54 L128.98,186.51 L128.94,186.50 L128.87,186.53 L128.77,186.58 L128.65,186.65 L128.51,186.73 L128.37,186.81 L128.22,186.88 L128.09,186.93 L127.98,186.96 L127.89,186.96 L127.83,186.93 L127.80,186.89 L127.76,186.84 L127.72,186.79 L127.68,186.75 L127.65,186.70 L127.61,186.65 L127.58,186.60 L127.55,186.55 L127.52,186.50 L127.49,186.45 L127.46,186.40 L127.43,186.35 L127.40,186.30 L127.37,186.24 L127.34,186.19 L127.32,186.14 L127.29,186.08 L127.27,186.03 L127.25,185.97 L127.23,185.92 L127.21,185.86 L127.19,185.81 L127.19,185.74 L127.23,185.67 L127.31,185.58 L127.43,185.50 L127.56,185.41 L127.70,185.32 L127.84,185.25 L127.96,185.18 L128.05,185.11 L128.11,185.06 L128.12,185.02 L128.12,184.98 L128.11,184.94 L128.11,184.90 L128.11,184.86 L128.10,184.82 L128.10,184.78 L128.10,184.74 L128.10,184.70 L128.10,184.66 L128.10,184.62 L128.10,184.58 L128.11,184.54 L128.11,184.50 L128.11,184.46 L128.12,184.42 L128.12,184.38 L128.11,184.34 L128.05,184.29 L127.96,184.22 L127.84,184.15 L127.70,184.08 L127.56,183.99 L127.43,183.90 L127.31,183.82 L127.23,183.73 L127.19,183.66 L127.19,183.59 L127.21,183.54 L127.23,183.48 L127.25,183.43 L127.27,183.37 L127.29,183.32 L127.32,183.26 L127.34,183.21 L127.37,183.16 L127.40,183.10 L127.43,183.05 L127.46,183.00 L127.49,182.95 L127.52,182.90 L127.55,182.85 L127.58,182.80 L127.61,182.75 L127.65,182.70 L127.68,182.65 L127.72,182.61 L127.76,182.56 L127.80,182.51 L127.83,182.47 L127.89,182.44 L127.98,182.44 L128.09,182.47 L128.22,182.52 L128.37,182.59 L128.51,182.67 L128.65,182.75 L128.77,182.82 L128.87,182.87 L128.94,182.90 L128.98,182.89 L129.02,182.86 L129.05,182.84 L129.08,182.82 L129.11,182.79 L129.15,182.77 L129.18,182.75 L129.22,182.73 L129.25,182.71 L129.28,182.69 L129.32,182.67 L129.36,182.65 L129.39,182.63 L129.43,182.62 L129.46,182.60 L129.50,182.58 L129.54,182.57 L129.57,182.53 L129.58,182.46 L129.59,182.35 L129.59,182.21 L129.59,182.05 L129.59,181.89 L129.60,181.73 L129.62,181.59 L129.65,181.47 L129.70,181.40 L129.75,181.36 L129.81,181.35 L129.87,181.34 L129.93,181.33 L129.99,181.33 L130.04,181.32 L130.10,181.31 L130.16,181.31 L130.22,181.30 L130.28,181.30 L130.34,181.30Z" fill="#4a5196"/><circle cx="130.4" cy="184.7" r="0.9" fill="#f7f8fa"/><path d="M1480.3,227 V217.5 M1477.6,220.3 L1480.3,216.8 L1483,220.3" fill="none" stroke="#4148a8" stroke-width="1.2"/><path d="M1862.2,246.39999999999998 L1865.8,242.0 L1869.3999999999999,246.39999999999998 Z" fill="#d2d4da"/><path d="M1862.2,371.3 L1865.8,375.7 L1869.3999999999999,371.3 Z" fill="#d2d4da"/><path d="M743.70,433.30 L743.81,433.30 L743.92,433.30 L744.03,433.31 L744.14,433.32 L744.25,433.32 L744.36,433.33 L744.47,433.35 L744.58,433.36 L744.69,433.38 L744.79,433.40 L744.90,433.42 L745.00,433.47 L745.09,433.59 L745.16,433.76 L745.21,433.97 L745.25,434.20 L745.27,434.45 L745.30,434.69 L745.32,434.89 L745.35,435.06 L745.40,435.18 L745.46,435.24 L745.54,435.27 L745.61,435.31 L745.69,435.34 L745.76,435.38 L745.83,435.41 L745.91,435.45 L745.98,435.49 L746.05,435.53 L746.12,435.57 L746.19,435.61 L746.26,435.66 L746.33,435.70 L746.40,435.75 L746.46,435.80 L746.53,435.85 L746.59,435.90 L746.68,435.92 L746.80,435.90 L746.96,435.84 L747.16,435.76 L747.37,435.66 L747.60,435.56 L747.82,435.48 L748.03,435.42 L748.21,435.39 L748.36,435.41 L748.45,435.47 L748.53,435.55 L748.60,435.64 L748.66,435.72 L748.73,435.81 L748.80,435.90 L748.86,435.99 L748.92,436.08 L748.98,436.17 L749.04,436.26 L749.10,436.36 L749.16,436.45 L749.21,436.55 L749.26,436.64 L749.31,436.74 L749.36,436.84 L749.41,436.94 L749.46,437.04 L749.50,437.14 L749.54,437.24 L749.58,437.34 L749.62,437.45 L749.66,437.55 L749.66,437.66 L749.60,437.80 L749.49,437.94 L749.33,438.09 L749.15,438.24 L748.95,438.39 L748.75,438.53 L748.58,438.65 L748.45,438.76 L748.37,438.86 L748.35,438.95 L748.36,439.03 L748.37,439.11 L748.38,439.19 L748.39,439.27 L748.39,439.35 L748.40,439.44 L748.40,439.52 L748.40,439.60 L748.40,439.68 L748.40,439.76 L748.39,439.85 L748.39,439.93 L748.38,440.01 L748.37,440.09 L748.36,440.17 L748.35,440.25 L748.37,440.34 L748.45,440.44 L748.58,440.55 L748.75,440.67 L748.95,440.81 L749.15,440.96 L749.33,441.11 L749.49,441.26 L749.60,441.40 L749.66,441.54 L749.66,441.65 L749.62,441.75 L749.58,441.86 L749.54,441.96 L749.50,442.06 L749.46,442.16 L749.41,442.26 L749.36,442.36 L749.31,442.46 L749.26,442.56 L749.21,442.65 L749.16,442.75 L749.10,442.84 L749.04,442.94 L748.98,443.03 L748.92,443.12 L748.86,443.21 L748.80,443.30 L748.73,443.39 L748.66,443.48 L748.60,443.56 L748.53,443.65 L748.45,443.73 L748.36,443.79 L748.21,443.81 L748.03,443.78 L747.82,443.72 L747.60,443.64 L747.37,443.54 L747.16,443.44 L746.96,443.36 L746.80,443.30 L746.68,443.28 L746.59,443.30 L746.53,443.35 L746.46,443.40 L746.40,443.45 L746.33,443.50 L746.26,443.54 L746.19,443.59 L746.12,443.63 L746.05,443.67 L745.98,443.71 L745.91,443.75 L745.83,443.79 L745.76,443.82 L745.69,443.86 L745.61,443.89 L745.54,443.93 L745.46,443.96 L745.40,444.02 L745.35,444.14 L745.32,444.31 L745.30,444.51 L745.27,444.75 L745.25,445.00 L745.21,445.23 L745.16,445.44 L745.09,445.61 L745.00,445.73 L744.90,445.78 L744.79,445.80 L744.69,445.82 L744.58,445.84 L744.47,445.85 L744.36,445.87 L744.25,445.88 L744.14,445.88 L744.03,445.89 L743.92,445.90 L743.81,445.90 L743.70,445.90 L743.59,445.90 L743.48,445.90 L743.37,445.89 L743.26,445.88 L743.15,445.88 L743.04,445.87 L742.93,445.85 L742.82,445.84 L742.71,445.82 L742.61,445.80 L742.50,445.78 L742.40,445.73 L742.31,445.61 L742.24,445.44 L742.19,445.23 L742.15,445.00 L742.13,444.75 L742.10,444.51 L742.08,444.31 L742.05,444.14 L742.00,444.02 L741.94,443.96 L741.86,443.93 L741.79,443.89 L741.71,443.86 L741.64,443.82 L741.57,443.79 L741.49,443.75 L741.42,443.71 L741.35,443.67 L741.28,443.63 L741.21,443.59 L741.14,443.54 L741.07,443.50 L741.00,443.45 L740.94,443.40 L740.87,443.35 L740.81,443.30 L740.72,443.28 L740.60,443.30 L740.44,443.36 L740.24,443.44 L740.03,443.54 L739.80,443.64 L739.58,443.72 L739.37,443.78 L739.19,443.81 L739.04,443.79 L738.95,443.73 L738.87,443.65 L738.80,443.56 L738.74,443.48 L738.67,443.39 L738.60,443.30 L738.54,443.21 L738.48,443.12 L738.42,443.03 L738.36,442.94 L738.30,442.84 L738.24,442.75 L738.19,442.65 L738.14,442.56 L738.09,442.46 L738.04,442.36 L737.99,442.26 L737.94,442.16 L737.90,442.06 L737.86,441.96 L737.82,441.86 L737.78,441.75 L737.74,441.65 L737.74,441.54 L737.80,441.40 L737.91,441.26 L738.07,441.11 L738.25,440.96 L738.45,440.81 L738.65,440.67 L738.82,440.55 L738.95,440.44 L739.03,440.34 L739.05,440.25 L739.04,440.17 L739.03,440.09 L739.02,440.01 L739.01,439.93 L739.01,439.85 L739.00,439.76 L739.00,439.68 L739.00,439.60 L739.00,439.52 L739.00,439.44 L739.01,439.35 L739.01,439.27 L739.02,439.19 L739.03,439.11 L739.04,439.03 L739.05,438.95 L739.03,438.86 L738.95,438.76 L738.82,438.65 L738.65,438.53 L738.45,438.39 L738.25,438.24 L738.07,438.09 L737.91,437.94 L737.80,437.80 L737.74,437.66 L737.74,437.55 L737.78,437.45 L737.82,437.34 L737.86,437.24 L737.90,437.14 L737.94,437.04 L737.99,436.94 L738.04,436.84 L738.09,436.74 L738.14,436.64 L738.19,436.55 L738.24,436.45 L738.30,436.36 L738.36,436.26 L738.42,436.17 L738.48,436.08 L738.54,435.99 L738.60,435.90 L738.67,435.81 L738.74,435.72 L738.80,435.64 L738.87,435.55 L738.95,435.47 L739.04,435.41 L739.19,435.39 L739.37,435.42 L739.58,435.48 L739.80,435.56 L740.03,435.66 L740.24,435.76 L740.44,435.84 L740.60,435.90 L740.72,435.92 L740.81,435.90 L740.87,435.85 L740.94,435.80 L741.00,435.75 L741.07,435.70 L741.14,435.66 L741.21,435.61 L741.28,435.57 L741.35,435.53 L741.42,435.49 L741.49,435.45 L741.57,435.41 L741.64,435.38 L741.71,435.34 L741.79,435.31 L741.86,435.27 L741.94,435.24 L742.00,435.18 L742.05,435.06 L742.08,434.89 L742.10,434.69 L742.13,434.45 L742.15,434.20 L742.19,433.97 L742.24,433.76 L742.31,433.59 L742.40,433.47 L742.50,433.42 L742.61,433.40 L742.71,433.38 L742.82,433.36 L742.93,433.35 L743.04,433.33 L743.15,433.32 L743.26,433.32 L743.37,433.31 L743.48,433.30 L743.59,433.30Z" fill="none" stroke="#4a5196" stroke-width="1.3" stroke-linejoin="round"/><circle cx="743.7" cy="439.6" r="1.9" fill="none" stroke="#4a5196" stroke-width="1.3"/><path d="M44.7,504.3 H55.5" stroke="#d7536d" stroke-width="1.3" stroke-linecap="round"/><path d="M47.4,504.2 V503.3 Q47.4,502.1 48.6,502.1 H51.6 Q52.8,502.1 52.8,503.3 V504.2" fill="none" stroke="#d7536d" stroke-width="1.25"/><path d="M45.9,504.6 L46.9,513.0 Q47.0,514.0 48.0,514.0 H52.2 Q53.2,514.0 53.3,513.0 L54.3,504.6" fill="none" stroke="#d7536d" stroke-width="1.3" stroke-linejoin="round"/><path d="M88.5,504.0 H85.2 Q83.7,504.0 83.7,505.5 V513.0 Q83.7,514.5 85.2,514.5 H92.3 Q93.8,514.5 93.8,513.0 V509.9" fill="none" stroke="#4a5196" stroke-width="1.3" stroke-linecap="round"/><path d="M87.0,511.0 L87.4,508.7 L93.2,503.0 Q94.1,502.2 95.0,503.0 Q95.8,503.9 95.0,504.79999999999995 L89.3,510.5 Z" fill="none" stroke="#4a5196" stroke-width="1.3" stroke-linejoin="round"/><circle cx="128.1" cy="503.40000000000003" r="1.5" fill="none" stroke="#4a5196" stroke-width="1.2"/><path d="M128.1,512.1 L126.1,508.6 Q125.69999999999999,506.5 128.1,506.5 Q130.5,506.5 130.1,508.6 Z" fill="none" stroke="#4a5196" stroke-width="1.2" stroke-linejoin="round"/><path d="M125.8,510.7 Q121.89999999999999,511.3 121.89999999999999,512.4 Q121.89999999999999,514.0 128.1,514.0 Q134.29999999999998,514.0 134.29999999999998,512.4 Q134.29999999999998,511.3 130.4,510.7" fill="none" stroke="#4a5196" stroke-width="1.2"/><g transform="translate(-1081.5,467.75)" fill="none" stroke="#2a3142" stroke-width="1.3" stroke-linecap="round"><path d="M1813.6,118.4 C1812.5,119.5 1810.2,119.9 1809,118.7 C1807.6,117.3 1807.9,115.3 1809.2,114 L1812,111.2 C1813.4,109.8 1815.5,109.6 1816.9,110.9 C1818.1,112.1 1817.9,114 1816.7,115.3"/><path d="M1817.4,109.4 C1818.6,108.2 1820.8,107.9 1822,109.1 C1823.3,110.4 1823.1,112.4 1821.8,113.7 L1819,116.5 C1817.6,117.9 1815.4,118 1814.2,116.8 C1813,115.6 1813.2,113.7 1814.4,112.5"/></g><g transform="translate(-1081.5,496.04999999999995)" fill="none" stroke="#2a3142" stroke-width="1.3" stroke-linecap="round"><path d="M1813.6,118.4 C1812.5,119.5 1810.2,119.9 1809,118.7 C1807.6,117.3 1807.9,115.3 1809.2,114 L1812,111.2 C1813.4,109.8 1815.5,109.6 1816.9,110.9 C1818.1,112.1 1817.9,114 1816.7,115.3"/><path d="M1817.4,109.4 C1818.6,108.2 1820.8,107.9 1822,109.1 C1823.3,110.4 1823.1,112.4 1821.8,113.7 L1819,116.5 C1817.6,117.9 1815.4,118 1814.2,116.8 C1813,115.6 1813.2,113.7 1814.4,112.5"/></g><g transform="translate(-1081.5,524.1500000000001)" fill="none" stroke="#2a3142" stroke-width="1.3" stroke-linecap="round"><path d="M1813.6,118.4 C1812.5,119.5 1810.2,119.9 1809,118.7 C1807.6,117.3 1807.9,115.3 1809.2,114 L1812,111.2 C1813.4,109.8 1815.5,109.6 1816.9,110.9 C1818.1,112.1 1817.9,114 1816.7,115.3"/><path d="M1817.4,109.4 C1818.6,108.2 1820.8,107.9 1822,109.1 C1823.3,110.4 1823.1,112.4 1821.8,113.7 L1819,116.5 C1817.6,117.9 1815.4,118 1814.2,116.8 C1813,115.6 1813.2,113.7 1814.4,112.5"/></g><g transform="translate(-1081.5,552.75)" fill="none" stroke="#2a3142" stroke-width="1.3" stroke-linecap="round"><path d="M1813.6,118.4 C1812.5,119.5 1810.2,119.9 1809,118.7 C1807.6,117.3 1807.9,115.3 1809.2,114 L1812,111.2 C1813.4,109.8 1815.5,109.6 1816.9,110.9 C1818.1,112.1 1817.9,114 1816.7,115.3"/><path d="M1817.4,109.4 C1818.6,108.2 1820.8,107.9 1822,109.1 C1823.3,110.4 1823.1,112.4 1821.8,113.7 L1819,116.5 C1817.6,117.9 1815.4,118 1814.2,116.8 C1813,115.6 1813.2,113.7 1814.4,112.5"/></g><g transform="translate(-1081.5,581.3500000000001)" fill="none" stroke="#2a3142" stroke-width="1.3" stroke-linecap="round"><path d="M1813.6,118.4 C1812.5,119.5 1810.2,119.9 1809,118.7 C1807.6,117.3 1807.9,115.3 1809.2,114 L1812,111.2 C1813.4,109.8 1815.5,109.6 1816.9,110.9 C1818.1,112.1 1817.9,114 1816.7,115.3"/><path d="M1817.4,109.4 C1818.6,108.2 1820.8,107.9 1822,109.1 C1823.3,110.4 1823.1,112.4 1821.8,113.7 L1819,116.5 C1817.6,117.9 1815.4,118 1814.2,116.8 C1813,115.6 1813.2,113.7 1814.4,112.5"/></g><g transform="translate(-1081.5,609.95)" fill="none" stroke="#2a3142" stroke-width="1.3" stroke-linecap="round"><path d="M1813.6,118.4 C1812.5,119.5 1810.2,119.9 1809,118.7 C1807.6,117.3 1807.9,115.3 1809.2,114 L1812,111.2 C1813.4,109.8 1815.5,109.6 1816.9,110.9 C1818.1,112.1 1817.9,114 1816.7,115.3"/><path d="M1817.4,109.4 C1818.6,108.2 1820.8,107.9 1822,109.1 C1823.3,110.4 1823.1,112.4 1821.8,113.7 L1819,116.5 C1817.6,117.9 1815.4,118 1814.2,116.8 C1813,115.6 1813.2,113.7 1814.4,112.5"/></g><g transform="translate(-1081.5,638.55)" fill="none" stroke="#2a3142" stroke-width="1.3" stroke-linecap="round"><path d="M1813.6,118.4 C1812.5,119.5 1810.2,119.9 1809,118.7 C1807.6,117.3 1807.9,115.3 1809.2,114 L1812,111.2 C1813.4,109.8 1815.5,109.6 1816.9,110.9 C1818.1,112.1 1817.9,114 1816.7,115.3"/><path d="M1817.4,109.4 C1818.6,108.2 1820.8,107.9 1822,109.1 C1823.3,110.4 1823.1,112.4 1821.8,113.7 L1819,116.5 C1817.6,117.9 1815.4,118 1814.2,116.8 C1813,115.6 1813.2,113.7 1814.4,112.5"/></g><g transform="translate(-1081.5,667.1500000000001)" fill="none" stroke="#2a3142" stroke-width="1.3" stroke-linecap="round"><path d="M1813.6,118.4 C1812.5,119.5 1810.2,119.9 1809,118.7 C1807.6,117.3 1807.9,115.3 1809.2,114 L1812,111.2 C1813.4,109.8 1815.5,109.6 1816.9,110.9 C1818.1,112.1 1817.9,114 1816.7,115.3"/><path d="M1817.4,109.4 C1818.6,108.2 1820.8,107.9 1822,109.1 C1823.3,110.4 1823.1,112.4 1821.8,113.7 L1819,116.5 C1817.6,117.9 1815.4,118 1814.2,116.8 C1813,115.6 1813.2,113.7 1814.4,112.5"/></g><g transform="translate(-1081.5,695.75)" fill="none" stroke="#2a3142" stroke-width="1.3" stroke-linecap="round"><path d="M1813.6,118.4 C1812.5,119.5 1810.2,119.9 1809,118.7 C1807.6,117.3 1807.9,115.3 1809.2,114 L1812,111.2 C1813.4,109.8 1815.5,109.6 1816.9,110.9 C1818.1,112.1 1817.9,114 1816.7,115.3"/><path d="M1817.4,109.4 C1818.6,108.2 1820.8,107.9 1822,109.1 C1823.3,110.4 1823.1,112.4 1821.8,113.7 L1819,116.5 C1817.6,117.9 1815.4,118 1814.2,116.8 C1813,115.6 1813.2,113.7 1814.4,112.5"/></g><g transform="translate(-1081.5,724.3500000000001)" fill="none" stroke="#2a3142" stroke-width="1.3" stroke-linecap="round"><path d="M1813.6,118.4 C1812.5,119.5 1810.2,119.9 1809,118.7 C1807.6,117.3 1807.9,115.3 1809.2,114 L1812,111.2 C1813.4,109.8 1815.5,109.6 1816.9,110.9 C1818.1,112.1 1817.9,114 1816.7,115.3"/><path d="M1817.4,109.4 C1818.6,108.2 1820.8,107.9 1822,109.1 C1823.3,110.4 1823.1,112.4 1821.8,113.7 L1819,116.5 C1817.6,117.9 1815.4,118 1814.2,116.8 C1813,115.6 1813.2,113.7 1814.4,112.5"/></g><path d="M749.4,572.7 L753,568.3 L756.6,572.7 Z" fill="#d2d4da"/><path d="M749.4,853.8 L753,858.2 L756.6,853.8 Z" fill="#d2d4da"/><circle cx="1334.2" cy="437.7" r="4.9" fill="none" stroke="#4a5196" stroke-width="1.3"/><path d="M1337.8,441.3 L1341.6,445.2" stroke="#4a5196" stroke-width="1.4" stroke-linecap="round"/><path d="M1375.90,432.80 L1376.01,432.80 L1376.12,432.80 L1376.23,432.81 L1376.34,432.82 L1376.45,432.82 L1376.56,432.83 L1376.67,432.85 L1376.78,432.86 L1376.89,432.88 L1376.99,432.90 L1377.10,432.92 L1377.20,432.97 L1377.29,433.09 L1377.36,433.26 L1377.41,433.47 L1377.45,433.70 L1377.47,433.95 L1377.50,434.19 L1377.52,434.39 L1377.55,434.56 L1377.60,434.68 L1377.66,434.74 L1377.74,434.77 L1377.81,434.81 L1377.89,434.84 L1377.96,434.88 L1378.03,434.91 L1378.11,434.95 L1378.18,434.99 L1378.25,435.03 L1378.32,435.07 L1378.39,435.11 L1378.46,435.16 L1378.53,435.20 L1378.60,435.25 L1378.66,435.30 L1378.73,435.35 L1378.79,435.40 L1378.88,435.42 L1379.00,435.40 L1379.16,435.34 L1379.36,435.26 L1379.57,435.16 L1379.80,435.06 L1380.02,434.98 L1380.23,434.92 L1380.41,434.89 L1380.56,434.91 L1380.65,434.97 L1380.73,435.05 L1380.80,435.14 L1380.86,435.22 L1380.93,435.31 L1381.00,435.40 L1381.06,435.49 L1381.12,435.58 L1381.18,435.67 L1381.24,435.76 L1381.30,435.86 L1381.36,435.95 L1381.41,436.05 L1381.46,436.14 L1381.51,436.24 L1381.56,436.34 L1381.61,436.44 L1381.66,436.54 L1381.70,436.64 L1381.74,436.74 L1381.78,436.84 L1381.82,436.95 L1381.86,437.05 L1381.86,437.16 L1381.80,437.30 L1381.69,437.44 L1381.53,437.59 L1381.35,437.74 L1381.15,437.89 L1380.95,438.03 L1380.78,438.15 L1380.65,438.26 L1380.57,438.36 L1380.55,438.45 L1380.56,438.53 L1380.57,438.61 L1380.58,438.69 L1380.59,438.77 L1380.59,438.85 L1380.60,438.94 L1380.60,439.02 L1380.60,439.10 L1380.60,439.18 L1380.60,439.26 L1380.59,439.35 L1380.59,439.43 L1380.58,439.51 L1380.57,439.59 L1380.56,439.67 L1380.55,439.75 L1380.57,439.84 L1380.65,439.94 L1380.78,440.05 L1380.95,440.17 L1381.15,440.31 L1381.35,440.46 L1381.53,440.61 L1381.69,440.76 L1381.80,440.90 L1381.86,441.04 L1381.86,441.15 L1381.82,441.25 L1381.78,441.36 L1381.74,441.46 L1381.70,441.56 L1381.66,441.66 L1381.61,441.76 L1381.56,441.86 L1381.51,441.96 L1381.46,442.06 L1381.41,442.15 L1381.36,442.25 L1381.30,442.34 L1381.24,442.44 L1381.18,442.53 L1381.12,442.62 L1381.06,442.71 L1381.00,442.80 L1380.93,442.89 L1380.86,442.98 L1380.80,443.06 L1380.73,443.15 L1380.65,443.23 L1380.56,443.29 L1380.41,443.31 L1380.23,443.28 L1380.02,443.22 L1379.80,443.14 L1379.57,443.04 L1379.36,442.94 L1379.16,442.86 L1379.00,442.80 L1378.88,442.78 L1378.79,442.80 L1378.73,442.85 L1378.66,442.90 L1378.60,442.95 L1378.53,443.00 L1378.46,443.04 L1378.39,443.09 L1378.32,443.13 L1378.25,443.17 L1378.18,443.21 L1378.11,443.25 L1378.03,443.29 L1377.96,443.32 L1377.89,443.36 L1377.81,443.39 L1377.74,443.43 L1377.66,443.46 L1377.60,443.52 L1377.55,443.64 L1377.52,443.81 L1377.50,444.01 L1377.47,444.25 L1377.45,444.50 L1377.41,444.73 L1377.36,444.94 L1377.29,445.11 L1377.20,445.23 L1377.10,445.28 L1376.99,445.30 L1376.89,445.32 L1376.78,445.34 L1376.67,445.35 L1376.56,445.37 L1376.45,445.38 L1376.34,445.38 L1376.23,445.39 L1376.12,445.40 L1376.01,445.40 L1375.90,445.40 L1375.79,445.40 L1375.68,445.40 L1375.57,445.39 L1375.46,445.38 L1375.35,445.38 L1375.24,445.37 L1375.13,445.35 L1375.02,445.34 L1374.91,445.32 L1374.81,445.30 L1374.70,445.28 L1374.60,445.23 L1374.51,445.11 L1374.44,444.94 L1374.39,444.73 L1374.35,444.50 L1374.33,444.25 L1374.30,444.01 L1374.28,443.81 L1374.25,443.64 L1374.20,443.52 L1374.14,443.46 L1374.06,443.43 L1373.99,443.39 L1373.91,443.36 L1373.84,443.32 L1373.77,443.29 L1373.69,443.25 L1373.62,443.21 L1373.55,443.17 L1373.48,443.13 L1373.41,443.09 L1373.34,443.04 L1373.27,443.00 L1373.20,442.95 L1373.14,442.90 L1373.07,442.85 L1373.01,442.80 L1372.92,442.78 L1372.80,442.80 L1372.64,442.86 L1372.44,442.94 L1372.23,443.04 L1372.00,443.14 L1371.78,443.22 L1371.57,443.28 L1371.39,443.31 L1371.24,443.29 L1371.15,443.23 L1371.07,443.15 L1371.00,443.06 L1370.94,442.98 L1370.87,442.89 L1370.80,442.80 L1370.74,442.71 L1370.68,442.62 L1370.62,442.53 L1370.56,442.44 L1370.50,442.34 L1370.44,442.25 L1370.39,442.15 L1370.34,442.06 L1370.29,441.96 L1370.24,441.86 L1370.19,441.76 L1370.14,441.66 L1370.10,441.56 L1370.06,441.46 L1370.02,441.36 L1369.98,441.25 L1369.94,441.15 L1369.94,441.04 L1370.00,440.90 L1370.11,440.76 L1370.27,440.61 L1370.45,440.46 L1370.65,440.31 L1370.85,440.17 L1371.02,440.05 L1371.15,439.94 L1371.23,439.84 L1371.25,439.75 L1371.24,439.67 L1371.23,439.59 L1371.22,439.51 L1371.21,439.43 L1371.21,439.35 L1371.20,439.26 L1371.20,439.18 L1371.20,439.10 L1371.20,439.02 L1371.20,438.94 L1371.21,438.85 L1371.21,438.77 L1371.22,438.69 L1371.23,438.61 L1371.24,438.53 L1371.25,438.45 L1371.23,438.36 L1371.15,438.26 L1371.02,438.15 L1370.85,438.03 L1370.65,437.89 L1370.45,437.74 L1370.27,437.59 L1370.11,437.44 L1370.00,437.30 L1369.94,437.16 L1369.94,437.05 L1369.98,436.95 L1370.02,436.84 L1370.06,436.74 L1370.10,436.64 L1370.14,436.54 L1370.19,436.44 L1370.24,436.34 L1370.29,436.24 L1370.34,436.14 L1370.39,436.05 L1370.44,435.95 L1370.50,435.86 L1370.56,435.76 L1370.62,435.67 L1370.68,435.58 L1370.74,435.49 L1370.80,435.40 L1370.87,435.31 L1370.94,435.22 L1371.00,435.14 L1371.07,435.05 L1371.15,434.97 L1371.24,434.91 L1371.39,434.89 L1371.57,434.92 L1371.78,434.98 L1372.00,435.06 L1372.23,435.16 L1372.44,435.26 L1372.64,435.34 L1372.80,435.40 L1372.92,435.42 L1373.01,435.40 L1373.07,435.35 L1373.14,435.30 L1373.20,435.25 L1373.27,435.20 L1373.34,435.16 L1373.41,435.11 L1373.48,435.07 L1373.55,435.03 L1373.62,434.99 L1373.69,434.95 L1373.77,434.91 L1373.84,434.88 L1373.91,434.84 L1373.99,434.81 L1374.06,434.77 L1374.14,434.74 L1374.20,434.68 L1374.25,434.56 L1374.28,434.39 L1374.30,434.19 L1374.33,433.95 L1374.35,433.70 L1374.39,433.47 L1374.44,433.26 L1374.51,433.09 L1374.60,432.97 L1374.70,432.92 L1374.81,432.90 L1374.91,432.88 L1375.02,432.86 L1375.13,432.85 L1375.24,432.83 L1375.35,432.82 L1375.46,432.82 L1375.57,432.81 L1375.68,432.80 L1375.79,432.80Z" fill="none" stroke="#4a5196" stroke-width="1.3" stroke-linejoin="round"/><circle cx="1375.9" cy="439.1" r="1.9" fill="none" stroke="#4a5196" stroke-width="1.3"/><path d="M839.2,501.2 V513.4 M833.1,507.3 H845.3" stroke="#4a5196" stroke-width="1.3"/><circle cx="878.7" cy="503.0" r="1.5" fill="none" stroke="#4a5196" stroke-width="1.2"/><path d="M878.7,511.7 L876.7,508.2 Q876.3000000000001,506.09999999999997 878.7,506.09999999999997 Q881.1,506.09999999999997 880.7,508.2 Z" fill="none" stroke="#4a5196" stroke-width="1.2" stroke-linejoin="round"/><path d="M876.4000000000001,510.29999999999995 Q872.5,510.9 872.5,512.0 Q872.5,513.6 878.7,513.6 Q884.9000000000001,513.6 884.9000000000001,512.0 Q884.9000000000001,510.9 881.0,510.29999999999995" fill="none" stroke="#4a5196" stroke-width="1.2"/><path d="M1382.7,572.7 L1386.3,568.3 L1389.8999999999999,572.7 Z" fill="#d2d4da"/><path d="M1382.7,851.8 L1386.3,856.2 L1389.8999999999999,851.8 Z" fill="#d2d4da"/><path d="M1849.20,432.60 L1849.31,432.60 L1849.42,432.60 L1849.53,432.61 L1849.64,432.62 L1849.75,432.62 L1849.86,432.63 L1849.97,432.65 L1850.08,432.66 L1850.19,432.68 L1850.29,432.70 L1850.40,432.72 L1850.50,432.77 L1850.59,432.89 L1850.66,433.06 L1850.71,433.27 L1850.75,433.50 L1850.77,433.75 L1850.80,433.99 L1850.82,434.19 L1850.85,434.36 L1850.90,434.48 L1850.96,434.54 L1851.04,434.57 L1851.11,434.61 L1851.19,434.64 L1851.26,434.68 L1851.33,434.71 L1851.41,434.75 L1851.48,434.79 L1851.55,434.83 L1851.62,434.87 L1851.69,434.91 L1851.76,434.96 L1851.83,435.00 L1851.90,435.05 L1851.96,435.10 L1852.03,435.15 L1852.09,435.20 L1852.18,435.22 L1852.30,435.20 L1852.46,435.14 L1852.66,435.06 L1852.87,434.96 L1853.10,434.86 L1853.32,434.78 L1853.53,434.72 L1853.71,434.69 L1853.86,434.71 L1853.95,434.77 L1854.03,434.85 L1854.10,434.94 L1854.16,435.02 L1854.23,435.11 L1854.30,435.20 L1854.36,435.29 L1854.42,435.38 L1854.48,435.47 L1854.54,435.56 L1854.60,435.66 L1854.66,435.75 L1854.71,435.85 L1854.76,435.94 L1854.81,436.04 L1854.86,436.14 L1854.91,436.24 L1854.96,436.34 L1855.00,436.44 L1855.04,436.54 L1855.08,436.64 L1855.12,436.75 L1855.16,436.85 L1855.16,436.96 L1855.10,437.10 L1854.99,437.24 L1854.83,437.39 L1854.65,437.54 L1854.45,437.69 L1854.25,437.83 L1854.08,437.95 L1853.95,438.06 L1853.87,438.16 L1853.85,438.25 L1853.86,438.33 L1853.87,438.41 L1853.88,438.49 L1853.89,438.57 L1853.89,438.65 L1853.90,438.74 L1853.90,438.82 L1853.90,438.90 L1853.90,438.98 L1853.90,439.06 L1853.89,439.15 L1853.89,439.23 L1853.88,439.31 L1853.87,439.39 L1853.86,439.47 L1853.85,439.55 L1853.87,439.64 L1853.95,439.74 L1854.08,439.85 L1854.25,439.97 L1854.45,440.11 L1854.65,440.26 L1854.83,440.41 L1854.99,440.56 L1855.10,440.70 L1855.16,440.84 L1855.16,440.95 L1855.12,441.05 L1855.08,441.16 L1855.04,441.26 L1855.00,441.36 L1854.96,441.46 L1854.91,441.56 L1854.86,441.66 L1854.81,441.76 L1854.76,441.86 L1854.71,441.95 L1854.66,442.05 L1854.60,442.14 L1854.54,442.24 L1854.48,442.33 L1854.42,442.42 L1854.36,442.51 L1854.30,442.60 L1854.23,442.69 L1854.16,442.78 L1854.10,442.86 L1854.03,442.95 L1853.95,443.03 L1853.86,443.09 L1853.71,443.11 L1853.53,443.08 L1853.32,443.02 L1853.10,442.94 L1852.87,442.84 L1852.66,442.74 L1852.46,442.66 L1852.30,442.60 L1852.18,442.58 L1852.09,442.60 L1852.03,442.65 L1851.96,442.70 L1851.90,442.75 L1851.83,442.80 L1851.76,442.84 L1851.69,442.89 L1851.62,442.93 L1851.55,442.97 L1851.48,443.01 L1851.41,443.05 L1851.33,443.09 L1851.26,443.12 L1851.19,443.16 L1851.11,443.19 L1851.04,443.23 L1850.96,443.26 L1850.90,443.32 L1850.85,443.44 L1850.82,443.61 L1850.80,443.81 L1850.77,444.05 L1850.75,444.30 L1850.71,444.53 L1850.66,444.74 L1850.59,444.91 L1850.50,445.03 L1850.40,445.08 L1850.29,445.10 L1850.19,445.12 L1850.08,445.14 L1849.97,445.15 L1849.86,445.17 L1849.75,445.18 L1849.64,445.18 L1849.53,445.19 L1849.42,445.20 L1849.31,445.20 L1849.20,445.20 L1849.09,445.20 L1848.98,445.20 L1848.87,445.19 L1848.76,445.18 L1848.65,445.18 L1848.54,445.17 L1848.43,445.15 L1848.32,445.14 L1848.21,445.12 L1848.11,445.10 L1848.00,445.08 L1847.90,445.03 L1847.81,444.91 L1847.74,444.74 L1847.69,444.53 L1847.65,444.30 L1847.63,444.05 L1847.60,443.81 L1847.58,443.61 L1847.55,443.44 L1847.50,443.32 L1847.44,443.26 L1847.36,443.23 L1847.29,443.19 L1847.21,443.16 L1847.14,443.12 L1847.07,443.09 L1846.99,443.05 L1846.92,443.01 L1846.85,442.97 L1846.78,442.93 L1846.71,442.89 L1846.64,442.84 L1846.57,442.80 L1846.50,442.75 L1846.44,442.70 L1846.37,442.65 L1846.31,442.60 L1846.22,442.58 L1846.10,442.60 L1845.94,442.66 L1845.74,442.74 L1845.53,442.84 L1845.30,442.94 L1845.08,443.02 L1844.87,443.08 L1844.69,443.11 L1844.54,443.09 L1844.45,443.03 L1844.37,442.95 L1844.30,442.86 L1844.24,442.78 L1844.17,442.69 L1844.10,442.60 L1844.04,442.51 L1843.98,442.42 L1843.92,442.33 L1843.86,442.24 L1843.80,442.14 L1843.74,442.05 L1843.69,441.95 L1843.64,441.86 L1843.59,441.76 L1843.54,441.66 L1843.49,441.56 L1843.44,441.46 L1843.40,441.36 L1843.36,441.26 L1843.32,441.16 L1843.28,441.05 L1843.24,440.95 L1843.24,440.84 L1843.30,440.70 L1843.41,440.56 L1843.57,440.41 L1843.75,440.26 L1843.95,440.11 L1844.15,439.97 L1844.32,439.85 L1844.45,439.74 L1844.53,439.64 L1844.55,439.55 L1844.54,439.47 L1844.53,439.39 L1844.52,439.31 L1844.51,439.23 L1844.51,439.15 L1844.50,439.06 L1844.50,438.98 L1844.50,438.90 L1844.50,438.82 L1844.50,438.74 L1844.51,438.65 L1844.51,438.57 L1844.52,438.49 L1844.53,438.41 L1844.54,438.33 L1844.55,438.25 L1844.53,438.16 L1844.45,438.06 L1844.32,437.95 L1844.15,437.83 L1843.95,437.69 L1843.75,437.54 L1843.57,437.39 L1843.41,437.24 L1843.30,437.10 L1843.24,436.96 L1843.24,436.85 L1843.28,436.75 L1843.32,436.64 L1843.36,436.54 L1843.40,436.44 L1843.44,436.34 L1843.49,436.24 L1843.54,436.14 L1843.59,436.04 L1843.64,435.94 L1843.69,435.85 L1843.74,435.75 L1843.80,435.66 L1843.86,435.56 L1843.92,435.47 L1843.98,435.38 L1844.04,435.29 L1844.10,435.20 L1844.17,435.11 L1844.24,435.02 L1844.30,434.94 L1844.37,434.85 L1844.45,434.77 L1844.54,434.71 L1844.69,434.69 L1844.87,434.72 L1845.08,434.78 L1845.30,434.86 L1845.53,434.96 L1845.74,435.06 L1845.94,435.14 L1846.10,435.20 L1846.22,435.22 L1846.31,435.20 L1846.37,435.15 L1846.44,435.10 L1846.50,435.05 L1846.57,435.00 L1846.64,434.96 L1846.71,434.91 L1846.78,434.87 L1846.85,434.83 L1846.92,434.79 L1846.99,434.75 L1847.07,434.71 L1847.14,434.68 L1847.21,434.64 L1847.29,434.61 L1847.36,434.57 L1847.44,434.54 L1847.50,434.48 L1847.55,434.36 L1847.58,434.19 L1847.60,433.99 L1847.63,433.75 L1847.65,433.50 L1847.69,433.27 L1847.74,433.06 L1847.81,432.89 L1847.90,432.77 L1848.00,432.72 L1848.11,432.70 L1848.21,432.68 L1848.32,432.66 L1848.43,432.65 L1848.54,432.63 L1848.65,432.62 L1848.76,432.62 L1848.87,432.61 L1848.98,432.60 L1849.09,432.60Z" fill="none" stroke="#4a5196" stroke-width="1.3" stroke-linejoin="round"/><circle cx="1849.2" cy="438.9" r="1.9" fill="none" stroke="#4a5196" stroke-width="1.3"/><path d="M1855.7,524.2 L1859.3,519.8 L1862.8999999999999,524.2 Z" fill="#d2d4da"/><path d="M1855.7,850.8 L1859.3,855.2 L1862.8999999999999,850.8 Z" fill="#d2d4da"/>
</svg>
</body></html>
